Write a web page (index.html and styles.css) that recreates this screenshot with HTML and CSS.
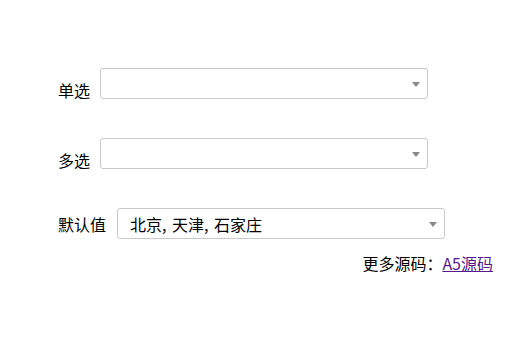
FILE: index.html
```html
<!DOCTYPE html>
<html lang="zh-CN">
<head>
<meta charset="utf-8">
<title>select</title>
<link rel="stylesheet" href="styles.css">
</head>
<body>
<div class="page">
  <div class="row row-empty">
    <span class="label">单选</span>
    <div class="select"><span class="value"></span><span class="arrow"></span></div>
  </div>
  <div class="row row-empty">
    <span class="label">多选</span>
    <div class="select"><span class="value"></span><span class="arrow"></span></div>
  </div>
  <div class="row row-filled">
    <span class="label">默认值</span>
    <div class="select"><span class="value">北京, 天津, 石家庄</span><span class="arrow"></span></div>
  </div>
  <div class="more">更多源码：<a class="link" href="#">A5源码</a></div>
</div>
</body>
</html>
```
FILE: styles.css
```css
html, body {
  margin: 0;
  padding: 0;
  background: #fff;
}
.page {
  padding: 68px 0 0 58px;
  width: 435px;
  font-family: "Noto Sans CJK SC", "Liberation Sans", sans-serif;
  font-size: 16px;
  color: #000;
}
.row {
  display: flex;
  margin-bottom: 39px;
}
.row-empty {
  align-items: flex-end;
}
.row-filled {
  align-items: center;
  margin-bottom: 14px;
}
.label {
  line-height: 16px;
  margin-right: 10px;
}
.row-empty .label {
  margin-bottom: 1px;
}
.row-filled .label {
  margin-right: 11px;
}
.select {
  box-sizing: border-box;
  width: 328px;
  height: 31px;
  border: 1px solid #c9c9c9;
  border-radius: 3px;
  background: #fff;
  display: flex;
  align-items: center;
  padding: 0 7px 0 12px;
}
.value {
  flex: 1;
  line-height: 20px;
  white-space: nowrap;
  word-spacing: 2px;
}
.arrow {
  width: 0;
  height: 0;
  border-left: 4px solid transparent;
  border-right: 4px solid transparent;
  border-top: 5px solid #888;
  margin-top: 1px;
}
.more {
  text-align: right;
  line-height: 20px;
}
.link {
  color: #551a8b;
  text-decoration: underline;
}
```
